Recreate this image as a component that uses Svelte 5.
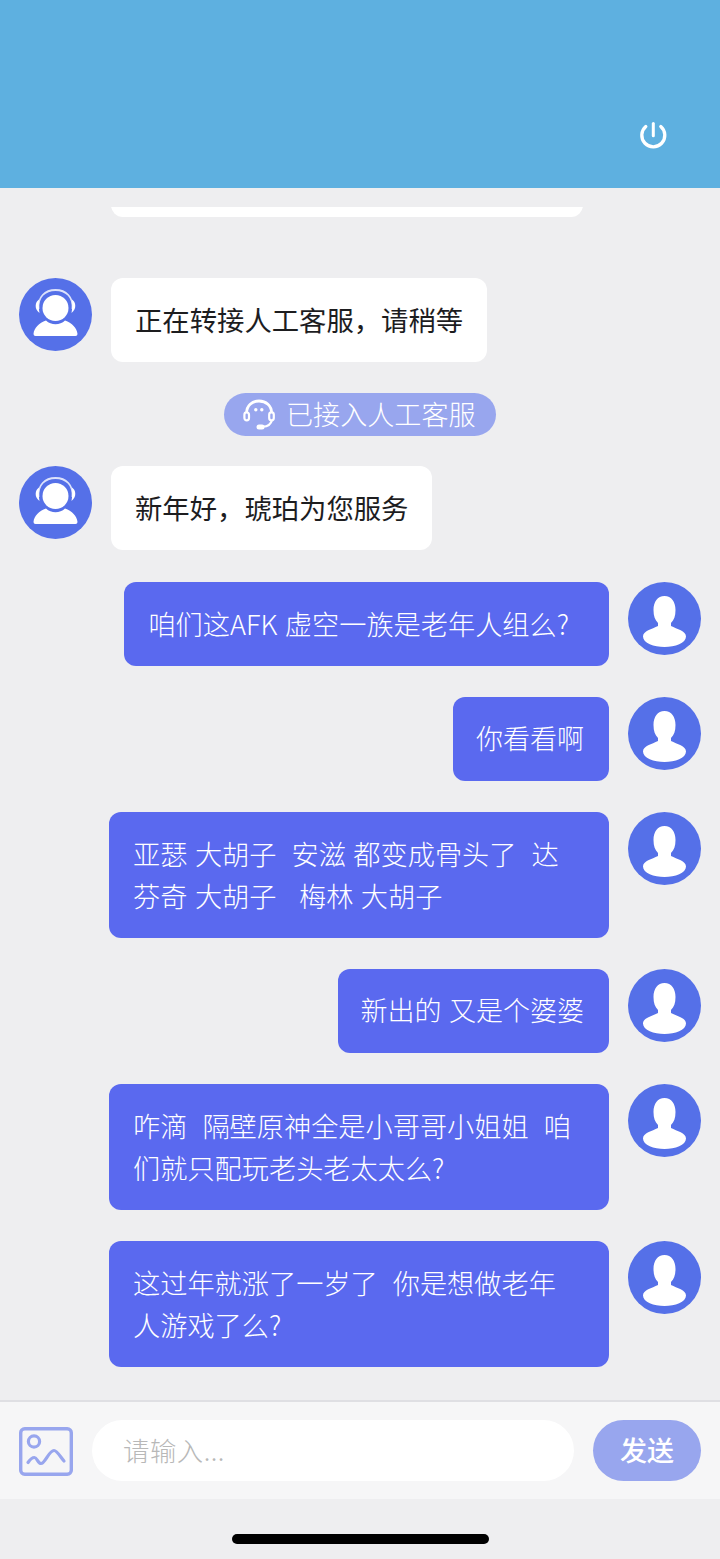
<script>
  const msgs = [
    { text: '咱们这AFK 虚空一族是老年人组么?  ', kind: 'wide' },
    { text: '你看看啊', kind: '' },
    { text: '亚瑟 大胡子  安滋 都变成骨头了  达芬奇 大胡子   梅林 大胡子', kind: 'wide full' },
    { text: '新出的 又是个婆婆', kind: '' },
    { text: '咋滴  隔壁原神全是小哥哥小姐姐  咱们就只配玩老头老太太么?', kind: 'wide full' },
    { text: '这过年就涨了一岁了  你是想做老年\n人游戏了么?', kind: 'wide full' }
  ];
</script>

{#snippet agent()}
  <svg class="avatar" viewBox="0 0 73 73" aria-hidden="true">
    <circle cx="36.5" cy="36.5" r="36.5" fill="#5570E8" />
    <path d="M19.5 31 C18.5 19 26 12 36.5 12 C47 12 54.5 19 53.5 31" fill="none" stroke="#fff" stroke-opacity=".8" stroke-width="1.8" />
    <path d="M20 21.5 C16 24 15 31 20.5 35 C19.6 30 19.6 26 20 21.5 Z" fill="#fff" />
    <path d="M53 21.5 C57 24 58 31 52.5 35 C53.4 30 53.4 26 53 21.5 Z" fill="#fff" />
    <circle cx="36.5" cy="30" r="13" fill="#fff" />
    <path d="M14.5 56 C15 50 20 45 27 42.5 C32 47.5 41 47.5 46 42.5 C53 45 58 50 58.5 56 Q58.5 58 56.5 58 H16.5 Q14.5 58 14.5 56 Z" fill="#fff" />
  </svg>
{/snippet}

{#snippet user()}
  <svg class="avatar" viewBox="0 0 73 73" aria-hidden="true">
    <circle cx="36.5" cy="36.5" r="36.5" fill="#5570E8" />
    <path d="M36.5 14 C29.5 14 25.5 20 25.5 28 C25.5 34 27 38 30 41 L30 44 C24 47 15 49 15 54.5 C15 61 26 65 36.5 65 C47 65 58 61 58 54.5 C58 49 49 47 43 44 L43 41 C46 38 47.5 34 47.5 28 C47.5 20 43.5 14 36.5 14 Z" fill="#fff" />
  </svg>
{/snippet}

<div class="page">
  <header class="top">
    <svg class="power" viewBox="0 0 30 30" aria-hidden="true">
      <path d="M7.8 6.6 A11.5 11.5 0 1 0 22.8 6.6" fill="none" stroke="#fff" stroke-width="3.3" stroke-linecap="round" />
      <path d="M15.3 3.6 V15.8" fill="none" stroke="#fff" stroke-width="3" stroke-linecap="round" />
    </svg>
  </header>

  <main class="chat">
    <div class="row clipped"><div class="bubble in old"></div></div>

    <div class="row">
      {@render agent()}
      <div class="bubble in">正在转接人工客服，请稍等</div>
    </div>

    <div class="notice">
      <svg class="headset" viewBox="0 0 33 32" aria-hidden="true">
        <path d="M3.6 14 C3.6 6.5 9 2 16 2 C23 2 28.6 6.5 28.6 14" fill="none" stroke="#fff" stroke-width="2.8" />
        <rect x="1.4" y="13.4" width="4.6" height="8" rx="2.3" fill="none" stroke="#fff" stroke-width="2.2" />
        <rect x="26.2" y="13.4" width="4.6" height="8" rx="2.3" fill="none" stroke="#fff" stroke-width="2.2" />
        <circle cx="12.8" cy="10.8" r="1.7" fill="#fff" />
        <circle cx="18.8" cy="10.8" r="1.7" fill="#fff" />
        <path d="M29 21 C28 25 25 27.5 20 27.7" fill="none" stroke="#fff" stroke-width="2.2" />
        <rect x="13.5" y="25.4" width="8" height="5" rx="2.5" fill="#fff" />
      </svg>
      <span>已接入人工客服</span>
    </div>

    <div class="row spaced">
      {@render agent()}
      <div class="bubble in">新年好，琥珀为您服务</div>
    </div>

    {#each msgs as m}
      <div class="row out">
        <div class="bubble mine {m.kind}">{m.text}</div>
        {@render user()}
      </div>
    {/each}
  </main>

  <footer class="bar">
    <svg class="pic" viewBox="0 0 54 49" aria-hidden="true">
      <rect x="1.7" y="1.7" width="50.6" height="45.6" rx="4" fill="none" stroke="#98A6EE" stroke-width="3.4" />
      <circle cx="15" cy="14.5" r="5.6" fill="none" stroke="#98A6EE" stroke-width="3.2" />
      <path d="M9 35.5 C11 32.5 13 30.5 15.5 30.5 C18 30.5 19 36.5 22 36.5 C26 36.5 30 23.5 35 23.5 C38 23.5 41.5 30 45 34" fill="none" stroke="#98A6EE" stroke-width="3.2" stroke-linecap="round" />
    </svg>
    <div class="input">请输入...</div>
    <div class="send">发送</div>
  </footer>

  <div class="home"><i></i></div>
</div>

<style>
  :global(body) {
    margin: 0;
    background: #eeeef0;
  }
  .page {
    width: 720px;
    height: 1559px;
    display: flex;
    flex-direction: column;
    overflow: hidden;
    font-family: "Noto Sans CJK SC", "Noto Sans", sans-serif;
    background: #eeeef0;
  }
  .top {
    flex: 0 0 188px;
    background: #5eb0e0;
    display: flex;
    justify-content: flex-end;
    align-items: flex-start;
    padding: 120px 52px 0 0;
    box-sizing: border-box;
  }
  .power {
    width: 30px;
    height: 30px;
  }
  .chat {
    flex: 0 0 1193px;
    margin-top: 19px;
    box-sizing: border-box;
    padding: 0 19px 33px;
    overflow: hidden;
    display: flex;
    flex-direction: column;
    justify-content: flex-end;
    gap: 31px;
  }
  .row {
    display: flex;
    align-items: flex-start;
    gap: 19px;
    flex: none;
  }
  .row.out {
    justify-content: flex-end;
  }
  .row.spaced {
    margin-bottom: 1px;
  }
  .clipped {
    margin-bottom: 30px;
    padding-left: 92px;
  }
  .avatar {
    width: 73px;
    height: 73px;
    flex: none;
    display: block;
  }
  .bubble {
    box-sizing: border-box;
    border-radius: 12px;
    line-height: 42px;
    white-space: pre-wrap;
    max-width: 500px;
  }
  .in {
    padding: 20px 24px 22px;
    background: #fff;
    color: #1d1d1f;
    font-size: 27.35px;
  }
  .old {
    width: 472px;
    height: 120px;
    padding: 0;
  }
  .mine {
    padding: 19.5px 25px 22.5px 23px;
    background: #5a69ef;
    color: #fff;
    font-size: 27px;
    font-weight: 300;
    word-spacing: 1.5px;
  }
  .mine.wide {
    padding-left: 24px;
    font-size: 27.2px;
  }
  .mine.full {
    width: 500px;
  }
  .notice {
    align-self: center;
    flex: none;
    height: 43px;
    width: 272px;
    box-sizing: border-box;
    margin: 0 0 -1px;
    padding: 0 0 2px 19px;
    display: flex;
    align-items: center;
    gap: 10px;
    border-radius: 22px;
    background: #98a6ee;
    color: #fff;
    font-size: 27.1px;
    font-weight: 300;
    white-space: nowrap;
  }
  .headset {
    width: 33px;
    height: 32px;
    flex: none;
    margin-top: 2px;
  }
  .bar {
    flex: 0 0 99px;
    box-sizing: border-box;
    border-top: 2px solid #dfdfe3;
    background: #f6f6f7;
    padding: 18px 19px 0;
    display: flex;
    align-items: flex-start;
    gap: 19px;
  }
  .pic {
    width: 54px;
    height: 49px;
    flex: none;
    margin-top: 7px;
  }
  .input {
    width: 482px;
    height: 61px;
    box-sizing: border-box;
    padding-left: 31px;
    border-radius: 31px;
    background: #fff;
    color: #b8b8b8;
    font-size: 26.4px;
    font-weight: 300;
    letter-spacing: 0.5px;
    line-height: 59px;
    flex: none;
  }
  .send {
    width: 108px;
    height: 61px;
    border-radius: 31px;
    background: #98a6ee;
    color: #fff;
    font-size: 27px;
    font-weight: 500;
    line-height: 59px;
    text-align: center;
    flex: none;
  }
  .home {
    flex: 1;
    padding-top: 35px;
    display: flex;
    justify-content: center;
  }
  .home i {
    display: block;
    width: 257px;
    height: 10px;
    border-radius: 5px;
    background: #000;
  }
</style>
